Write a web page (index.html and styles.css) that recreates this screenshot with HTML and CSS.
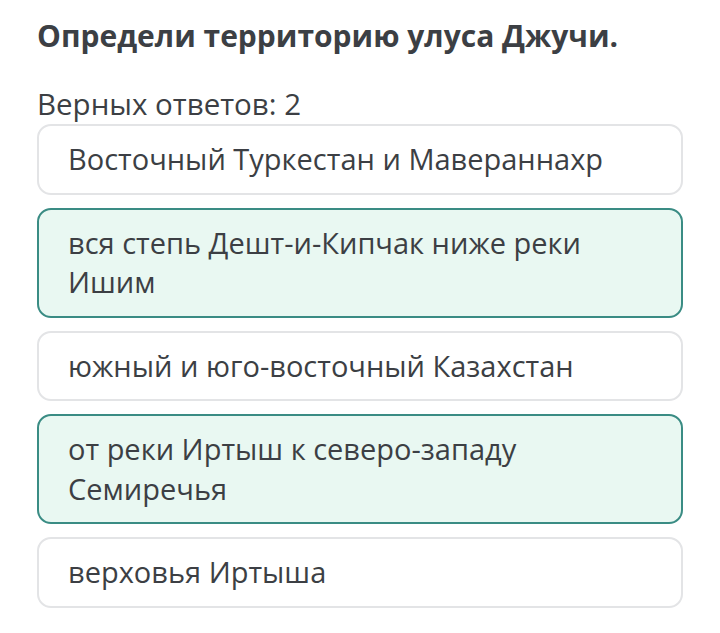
FILE: index.html
```html
<!DOCTYPE html>
<html lang="ru">
<head>
<meta charset="utf-8">
<link rel="stylesheet" href="styles.css">
</head>
<body>
<main class="quiz">
  <h1 class="question">Определи территорию улуса Джучи.</h1>
  <p class="hint">Верных ответов: 2</p>
  <ul class="options">
    <li class="option">Восточный Туркестан и Мавераннахр</li>
    <li class="option correct">вся степь Дешт-и-Кипчак ниже реки Ишим</li>
    <li class="option">южный и юго-восточный Казахстан</li>
    <li class="option correct">от реки Иртыш к северо-западу Семиречья</li>
    <li class="option">верховья Иртыша</li>
  </ul>
</main>
</body>
</html>
```

FILE: styles.css
```css
html, body {
  margin: 0;
  padding: 0;
  background: #ffffff;
}
body {
  font-family: "Open Sans", "Noto Sans", sans-serif;
  color: #3c3f44;
}
.quiz {
  padding: 16px 37px 0 37px;
}
.question {
  margin: 0;
  font-size: 30px;
  font-weight: 700;
  line-height: 40px;
  color: #3c3f44;
}
.hint {
  margin: 30px 0 2px 0;
  font-size: 29.5px;
  line-height: 36px;
}
.options {
  list-style: none;
  margin: 0;
  padding: 0;
  display: flex;
  flex-direction: column;
  gap: 13px;
  width: 646px;
}
.option {
  box-sizing: border-box;
  border: 2px solid #e3e4e6;
  border-radius: 14px;
  padding: 13px 60px 14px 29px;
  font-size: 29px;
  line-height: 39.5px;
  background: #ffffff;
}
.option.correct {
  border-color: #3a8c84;
  background: #e9f8f2;
}
```
